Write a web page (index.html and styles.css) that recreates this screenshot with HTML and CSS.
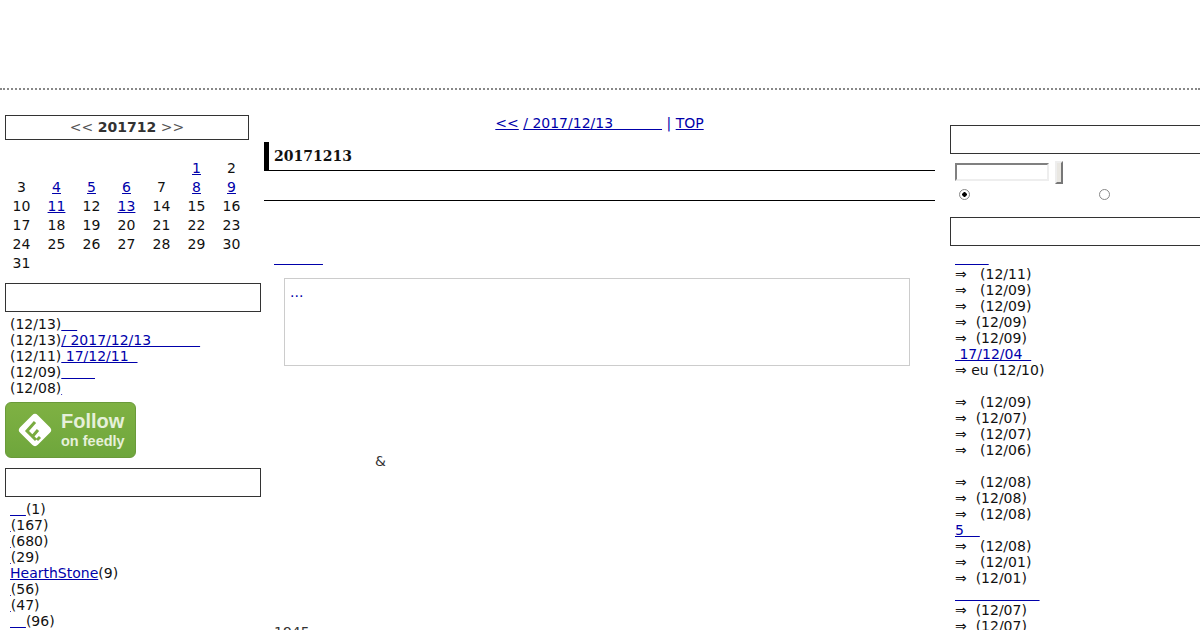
FILE: index.html
```html
<!DOCTYPE html>
<html>
<head>
<meta charset="utf-8">
<title>20171213</title>
<link rel="stylesheet" href="styles.css">
</head>
<body>
<header class="banner"></header>
<div class="page">
  <aside class="left">
    <div class="cal-head"><span class="cal-arrow">&lt;&lt;</span> <b>201712</b> <span class="cal-arrow">&gt;&gt;</span></div>
    <div class="cal">
      <span></span><span></span><span></span><span></span><span></span><a href="#">1</a><span>2</span>
      <span>3</span><a href="#">4</a><a href="#">5</a><a href="#">6</a><span>7</span><a href="#">8</a><a href="#">9</a>
      <span>10</span><a href="#">11</a><span>12</span><a href="#">13</a><span>14</span><span>15</span><span>16</span>
      <span>17</span><span>18</span><span>19</span><span>20</span><span>21</span><span>22</span><span>23</span>
      <span>24</span><span>25</span><span>26</span><span>27</span><span>28</span><span>29</span><span>30</span>
      <span>31</span>
    </div>
    <div class="box box-wide"></div>
    <div class="list">
      <div>(12/13)<a href="#">&nbsp;&nbsp;&ensp;</a></div>
      <div>(12/13)<a href="#">/ 2017/12/13&nbsp;&nbsp;&nbsp;&nbsp;&nbsp;&nbsp;&nbsp;&nbsp;&nbsp;&nbsp;&nbsp;</a></div>
      <div>(12/11)<a href="#">&nbsp;17/12/11&nbsp;&nbsp;</a></div>
      <div>(12/09)<a href="#">&nbsp;&nbsp;&nbsp;&nbsp;&nbsp;&nbsp;&ensp;</a></div>
      <div>(12/08)<a class="tick" href="#">&#8202;</a></div>
    </div>
    <a class="feedly" href="#">
      <svg class="feedly-icon" width="38" height="38" viewBox="0 0 38 38">
        <rect x="6.5" y="6.5" width="25" height="25" rx="4" transform="rotate(45 19 19)" fill="#fff"/>
        <path d="M19 11 L11 20 L20 29 M22 19 L16 26 M24 26 L21 29" stroke="#79ab3f" stroke-width="3" fill="none"/>
      </svg>
      <span class="feedly-text"><span class="follow">Follow</span><span class="on">on feedly</span></span>
    </a>
    <div class="box box-wide box-cat"></div>
    <div class="list">
      <div><a href="#">&nbsp;&nbsp;&ensp;</a>(1)</div>
      <div><a class="tick" href="#">&#8202;</a>(167)</div>
      <div><a class="tick" href="#">&#8202;</a>(680)</div>
      <div><a class="tick" href="#">&#8202;</a>(29)</div>
      <div><a href="#">HearthStone</a>(9)</div>
      <div><a class="tick" href="#">&#8202;</a>(56)</div>
      <div><a class="tick" href="#">&#8202;</a>(47)</div>
      <div><a href="#">&nbsp;&nbsp;&ensp;</a>(96)</div>
    </div>
  </aside>
  <main class="center">
    <div class="nav"><a href="#">&lt;&lt;</a> <a href="#">/ 2017/12/13&nbsp;&nbsp;&nbsp;&nbsp;&nbsp;&nbsp;&nbsp;&nbsp;&nbsp;&nbsp;&nbsp;</a> <span class="sep">|</span> <a href="#">TOP</a></div>
    <h2 class="title">20171213</h2>
    <div class="rule"></div>
    <div class="entry-link"><a href="#">&nbsp;&nbsp;&nbsp;&nbsp;&nbsp;&nbsp;&nbsp;&nbsp;&nbsp;&nbsp;&nbsp;</a></div>
    <div class="quote"><a href="#">...</a></div>
    <p class="amp">&amp;</p>
    <p class="year">1945</p>
  </main>
  <aside class="right">
    <div class="box box-r1"></div>
    <form class="search">
      <input class="search-input" type="text"><input class="search-btn" type="button">
      <div class="radios">
        <label class="radio-a"><input type="radio" name="s" checked></label>
        <label class="radio-b"><input type="radio" name="s"></label>
      </div>
    </form>
    <div class="box box-r2"></div>
    <div class="list rlist">
      <div><a href="#">&nbsp;&nbsp;&nbsp;&nbsp;&nbsp;&nbsp;&ensp;</a></div>
      <div>⇒&nbsp;&nbsp;&nbsp;(12/11)</div>
      <div>⇒&nbsp;&nbsp;&nbsp;(12/09)</div>
      <div>⇒&nbsp;&nbsp;&nbsp;(12/09)</div>
      <div>⇒&nbsp;&nbsp;(12/09)</div>
      <div>⇒&nbsp;&nbsp;(12/09)</div>
      <div><a href="#">&nbsp;17/12/04&nbsp;&nbsp;</a></div>
      <div>⇒ eu (12/10)</div>
      <div>&nbsp;</div>
      <div>⇒&nbsp;&nbsp;&nbsp;(12/09)</div>
      <div>⇒&nbsp;&nbsp;(12/07)</div>
      <div>⇒&nbsp;&nbsp;&nbsp;(12/07)</div>
      <div>⇒&nbsp;&nbsp;&nbsp;(12/06)</div>
      <div>&nbsp;</div>
      <div>⇒&nbsp;&nbsp;&nbsp;(12/08)</div>
      <div>⇒&nbsp;&nbsp;(12/08)</div>
      <div>⇒&nbsp;&nbsp;&nbsp;(12/08)</div>
      <div><a href="#">5&nbsp;&nbsp;&ensp;</a></div>
      <div>⇒&nbsp;&nbsp;&nbsp;(12/08)</div>
      <div>⇒&nbsp;&nbsp;&nbsp;(12/01)</div>
      <div>⇒&nbsp;&nbsp;(12/01)</div>
      <div><a href="#">&nbsp;&nbsp;&nbsp;&nbsp;&nbsp;&nbsp;&nbsp;&nbsp;&nbsp;&nbsp;&nbsp;&nbsp;&nbsp;&nbsp;&nbsp;&nbsp;&nbsp;&nbsp;&nbsp;</a></div>
      <div>⇒&nbsp;&nbsp;(12/07)</div>
      <div>⇒&nbsp;&nbsp;(12/07)</div>
    </div>
  </aside>
</div>
</body>
</html>
```
FILE: styles.css
```css
html, body {
  margin: 0;
  height: 630px;
  overflow: hidden;
  background: #fff;
}
body {
  font-family: "DejaVu Sans", sans-serif;
  font-size: 14px;
  line-height: 16px;
  color: #111;
}
a { color: #0000aa; }
.tick { letter-spacing: -0.6px; }
.banner {
  height: 88px;
  border-bottom: 2px dotted #888;
}
.page {
  display: flex;
  align-items: flex-start;
  width: 1300px;
}
.left {
  flex: none;
  width: 256px;
  margin-left: 5px;
  padding-top: 25px;
}
.center {
  flex: none;
  width: 671px;
  margin-left: 3px;
  padding-top: 25px;
}
.right {
  flex: none;
  width: 300px;
  margin-left: 15px;
  padding-top: 35px;
}
.cal-head {
  box-sizing: border-box;
  width: 244px;
  height: 25px;
  border: 1px solid #333;
  text-align: center;
  line-height: 23px;
  color: #333;
}
.cal-arrow { color: #555; }
.cal {
  display: grid;
  grid-template-columns: repeat(7, 35px);
  grid-auto-rows: 19px;
  width: 245px;
  margin: 19px 0 0 -1px;
  text-align: center;
  line-height: 19px;
}
.box {
  box-sizing: border-box;
  border: 1px solid #333;
}
.box-wide {
  width: 256px;
  height: 29px;
  margin-top: 10px;
}
.box-cat { margin-top: 10px; }
.list {
  padding: 4px 0 0 5px;
  white-space: nowrap;
}
.feedly {
  display: flex;
  align-items: center;
  box-sizing: border-box;
  width: 131px;
  height: 56px;
  margin-top: 6px;
  border: 1px solid #6a9a3a;
  border-radius: 6px;
  background: linear-gradient(#7fb143, #6ea63c);
  text-decoration: none;
  color: #fff;
}
.feedly-icon {
  flex: none;
  margin-left: 10px;
}
.feedly-text {
  display: flex;
  flex-direction: column;
  margin-left: 7px;
  font-family: "Liberation Sans", sans-serif;
  font-weight: bold;
  color: #e6f0da;
}
.follow {
  font-size: 20px;
  line-height: 22px;
}
.on {
  font-size: 14.5px;
  line-height: 18px;
}
.nav {
  text-align: center;
}
.sep { color: #0000aa; }
.title {
  box-sizing: border-box;
  height: 29px;
  margin: 11px 0 0;
  padding-left: 5px;
  border-left: 5px solid #000;
  border-bottom: 1px solid #000;
  font-family: "DejaVu Serif", serif;
  font-size: 14px;
  line-height: 28px;
  font-weight: bold;
  color: #111;
}
.rule {
  height: 29px;
  border-bottom: 1px solid #000;
}
.entry-link {
  margin-top: 49px;
  padding-left: 10px;
}
.quote {
  box-sizing: border-box;
  width: 626px;
  height: 88px;
  margin: 12px 0 0 20px;
  padding: 5px;
  border: 1px solid #ccc;
}
.quote a { text-decoration: none; }
.amp {
  margin: 87px 0 0 111px;
  color: #333;
}
.year {
  margin: 155px 0 0 10px;
  color: #333;
}
.box-r1 {
  height: 29px;
}
.search {
  padding: 7px 0 0 5px;
  height: 56px;
  box-sizing: border-box;
  margin-bottom: 7px;
}
.search-input {
  box-sizing: border-box;
  width: 94px;
  height: 18px;
  margin: 2px 6px 0 0;
  padding: 0;
  border: 2px solid;
  border-color: #808080 #eee #eee #808080;
  background: #fff;
  vertical-align: top;
}
.search-btn {
  box-sizing: border-box;
  width: 8px;
  height: 23px;
  margin: 0;
  padding: 0;
  border: 2px solid;
  border-color: #eee #777 #777 #eee;
  background: #e9e7e2;
  vertical-align: top;
}
.radios {
  display: flex;
  padding-top: 4px;
}
.radios label {
  display: block;
  flex: none;
  width: 140px;
  height: 14px;
}
.radios input {
  display: block;
  appearance: none;
  box-sizing: border-box;
  width: 11px;
  height: 11px;
  margin: 1px 0 0 4px;
  border: 1px solid #888;
  border-radius: 50%;
  background: #fff;
}
.radios input:checked {
  background: radial-gradient(circle, #000 0, #000 2px, #fff 2.5px);
}
.box-r2 {
  height: 29px;
}
.rlist {
  padding-top: 4px;
}
```
